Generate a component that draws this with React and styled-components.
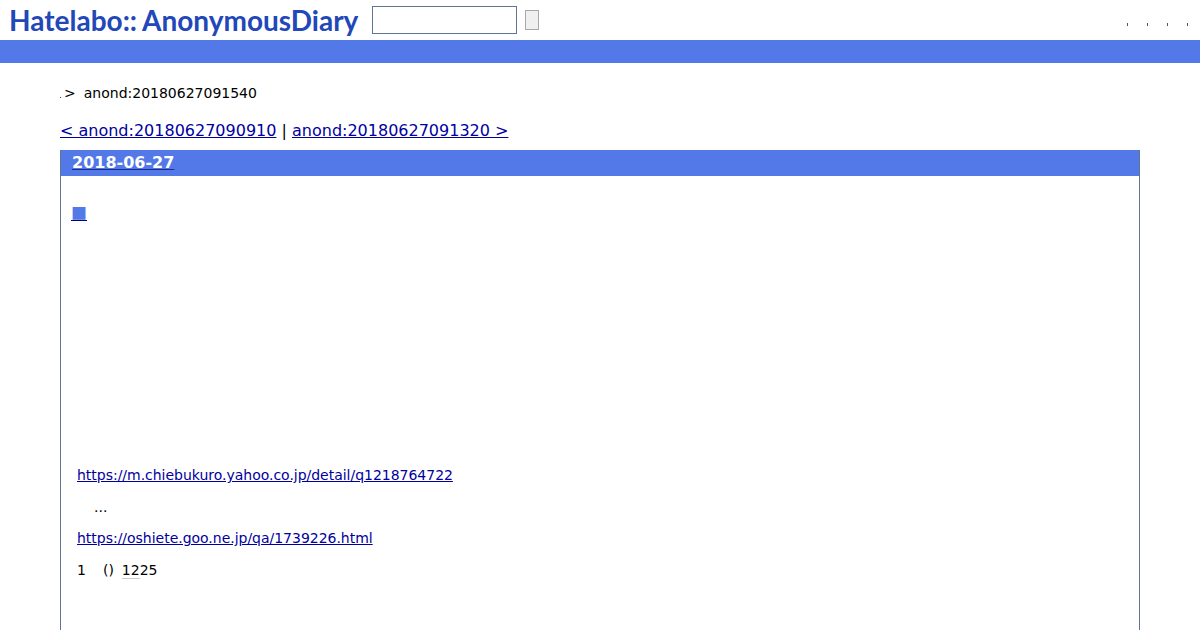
import React from 'react';
import styled, { createGlobalStyle } from 'styled-components';

const GlobalStyle = createGlobalStyle`
  html, body {
    margin: 0;
    padding: 0;
    height: 630px;
    overflow: hidden;
    background: #fff;
    font-family: "DejaVu Sans", sans-serif;
    color: #000;
  }
`;

const Header = styled.header`
  display: flex;
  align-items: center;
  height: 40px;
  padding-left: 9px;
`;

const Logo = styled.a`
  width: 349px;
  font-family: "Lato", sans-serif;
  font-weight: 700;
  font-size: 28px;
  white-space: nowrap;
  color: #2147b8;
  text-decoration: none;
`;

const LogoColons = styled.span`
  margin-right: 5px;
`;

const SearchInput = styled.input`
  box-sizing: border-box;
  width: 145px;
  height: 28px;
  margin-left: 14px;
  border: 1px solid #5f7596;
  background: #fff;
  padding: 0;
`;

const SearchButton = styled.button`
  box-sizing: border-box;
  width: 14px;
  height: 20px;
  margin-left: 8px;
  padding: 0;
  border: 1px solid #a8a8a8;
  background: #efefef;
`;

const UserMenu = styled.nav`
  display: flex;
  gap: 19px;
  margin-left: auto;
  margin-right: 12px;
  padding-top: 8px;
`;

const MenuTick = styled.span`
  display: block;
  width: 1px;
  height: 3px;
  background: #555;
`;

const Band = styled.div`
  height: 23px;
  background: #5279e7;
`;

const Main = styled.main`
  padding: 21px 60px 0;
`;

const Breadcrumb = styled.div`
  display: flex;
  align-items: center;
  height: 18px;
  font-size: 14px;
  line-height: 18px;
`;

const RootDot = styled.span`
  width: 1px;
  height: 1px;
  margin-top: 8px;
  margin-right: 3px;
  background: #444;
`;

const Crumb = styled.span`
  margin-left: 8px;
`;

const Pager = styled.div`
  margin-top: 19px;
  font-size: 16px;
  line-height: 19px;
  height: 20px;
  white-space: pre;

  a {
    color: #0000a0;
  }
`;

const Section = styled.section`
  box-sizing: border-box;
  height: 800px;
  margin-top: 9px;
  border: 1px solid #5f7596;
  border-top: none;
`;

const DateBar = styled.h1`
  margin: 0;
  height: 26px;
  padding-left: 11px;
  background: #5279e7;
  font-size: 16px;
  font-weight: bold;
  line-height: 26px;

  a {
    color: #fff;
    text-decoration-color: #1b2f8f;
  }
`;

const EntryMark = styled.h3`
  margin: 24px 0 0 10px;
  height: 24px;
  font-family: "Noto Sans CJK JP", sans-serif;
  font-size: 16px;
  font-weight: normal;
  line-height: 24px;

  a {
    color: #5279e7;
    text-decoration-color: #00008b;
  }
`;

const Body = styled.div`
  margin-top: 242px;
  padding-left: 16px;
  font-size: 14px;
  line-height: 19px;
`;

const Para = styled.p`
  margin: 0 0 ${(p) => p.$gap}px;
  padding-left: ${(p) => p.$indent || 0}px;
  white-space: pre;

  a {
    color: #0000a0;
    letter-spacing: -0.02px;
  }
`;

const Keyword = styled.span`
  border-bottom: 1px solid #ccc;
`;

const Spacer = styled.span`
  display: inline-block;
  width: ${(p) => p.$width}px;
`;

export default function App() {
  return (
    <>
      <GlobalStyle />
      <Header>
        <Logo href="#">
          Hatelabo<LogoColons>::</LogoColons>AnonymousDiary
        </Logo>
        <SearchInput type="text" />
        <SearchButton type="button" />
        <UserMenu>
          <MenuTick />
          <MenuTick />
          <MenuTick />
          <MenuTick />
        </UserMenu>
      </Header>
      <Band />
      <Main>
        <Breadcrumb>
          <RootDot />
          &gt;
          <Crumb>anond:20180627091540</Crumb>
        </Breadcrumb>
        <Pager>
          <a href="#">&lt; anond:20180627090910</a> | <a href="#">anond:20180627091320 &gt;</a>
        </Pager>
        <Section>
          <DateBar>
            <a href="#">2018-06-27</a>
          </DateBar>
          <EntryMark>
            <a href="#">■</a>
          </EntryMark>
          <Body>
            <Para $gap={13}>
              <a href="#">https://m.chiebukuro.yahoo.co.jp/detail/q1218764722</a>
            </Para>
            <Para $gap={12} $indent={17}>...</Para>
            <Para $gap={13}>
              <a href="#">https://oshiete.goo.ne.jp/qa/1739226.html</a>
            </Para>
            <Para $gap={0}>
              1<Spacer $width={17} />()<Spacer $width={8} />
              <Keyword>12</Keyword>25
            </Para>
          </Body>
        </Section>
      </Main>
    </>
  );
}
